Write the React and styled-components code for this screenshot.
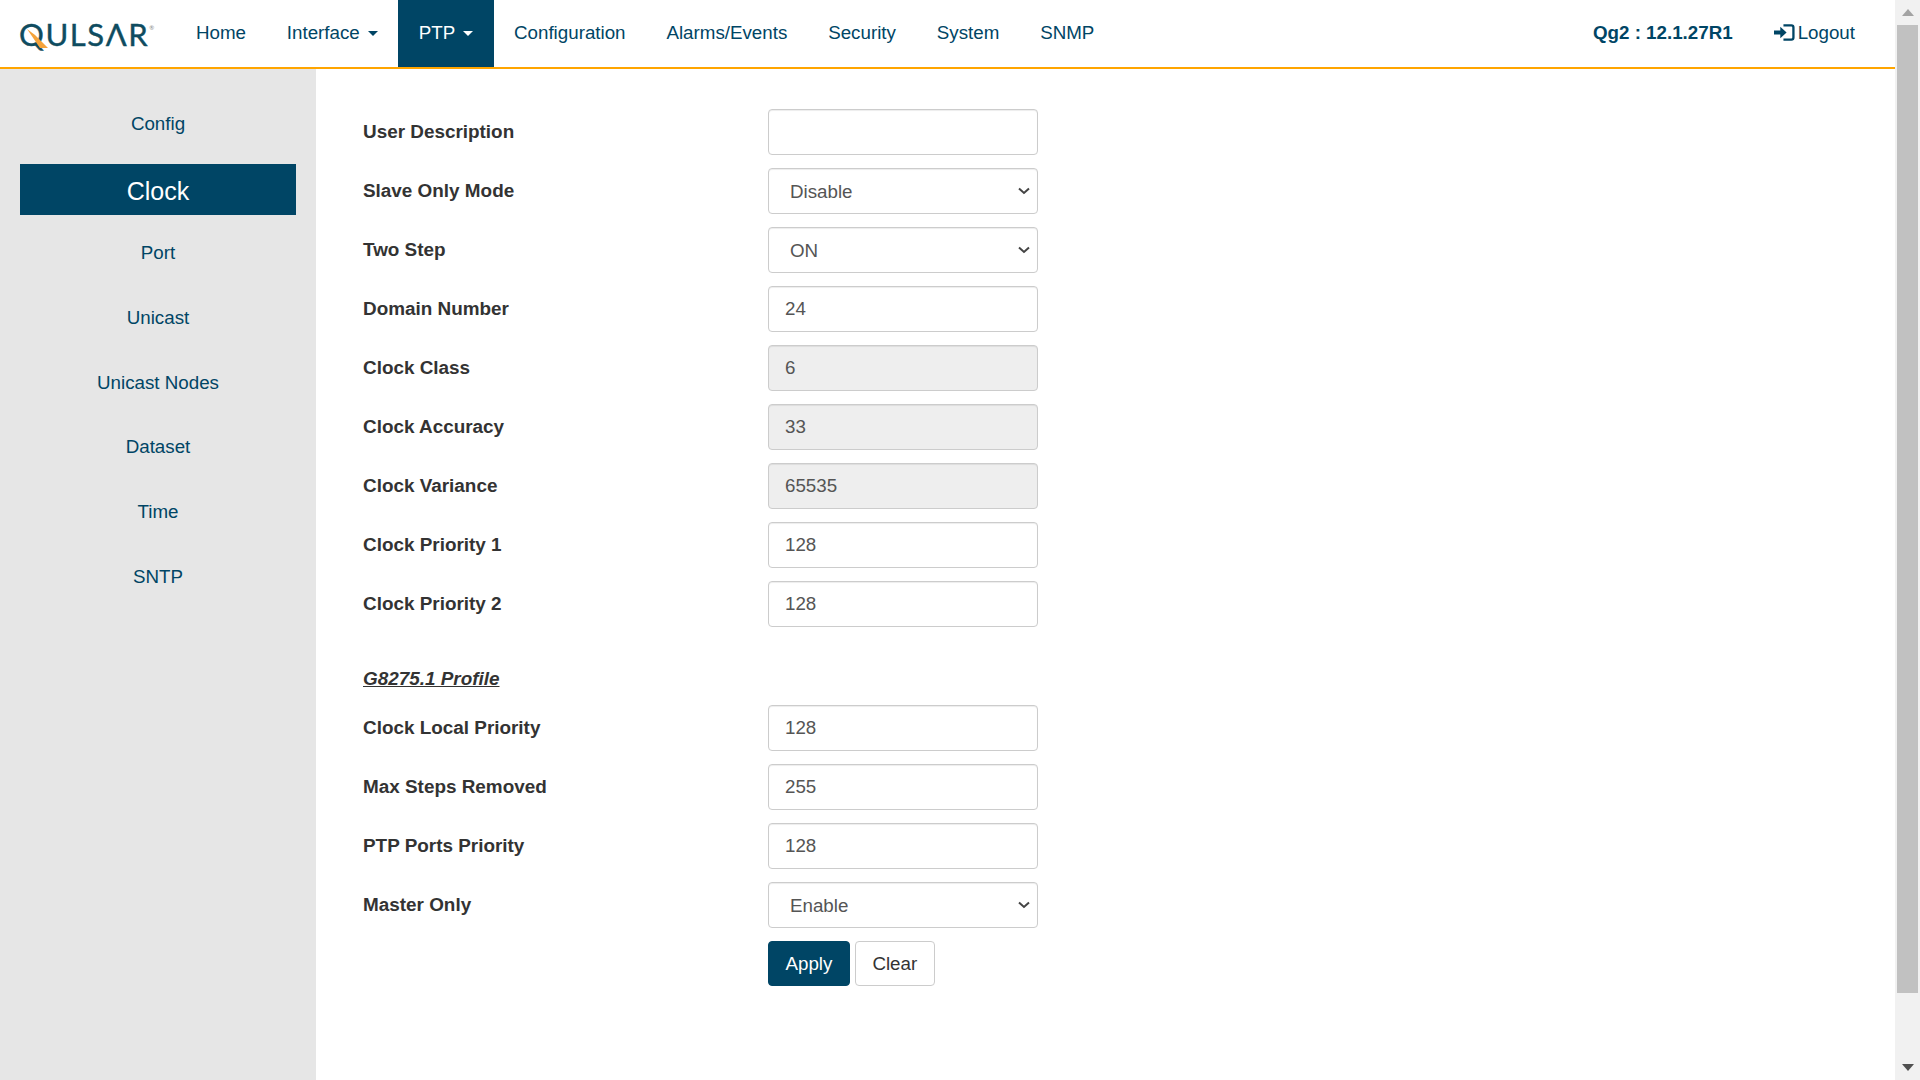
import styled, { createGlobalStyle } from 'styled-components'

const GlobalStyle = createGlobalStyle`
  html, body {
    margin: 0;
    height: 100%;
    overflow: hidden;
    background: #fff;
  }
  * {
    box-sizing: border-box;
  }
  body {
    font-family: "Liberation Sans", Arial, sans-serif;
    color: #333;
  }
`

const Page = styled.div`
  display: flex;
  height: 100vh;
`

const Main = styled.div`
  flex: 1;
  min-width: 0;
  display: flex;
  flex-direction: column;
`

const Navbar = styled.nav`
  height: 69px;
  flex: none;
  display: flex;
  align-items: stretch;
  border-bottom: 2px solid #ffa500;
  background: #fff;
`

const Logo = styled.div`
  position: relative;
  width: 175.5px;
  padding-left: 19px;
  line-height: 55px;
  height: 67px;
  font-family: Lato, sans-serif;
  font-size: 31px;
  letter-spacing: 1.6px;
  color: #0f4c60;
  -webkit-text-stroke: 0.4px #0f4c60;
  white-space: nowrap;
`

const LogoMark = styled.svg`
  position: absolute;
  left: 27px;
  top: 29px;
  width: 22px;
  height: 19px;
`

const LogoReg = styled.span`
  font-size: 6px;
  vertical-align: 16px;
  letter-spacing: 0;
  color: #888;
  -webkit-text-stroke: 0;
`

const NavItem = styled.a`
  display: flex;
  align-items: center;
  gap: 8px;
  padding: 0 20.45px 2px;
  height: 67px;
  font-size: 18.75px;
  color: ${p => (p.$active ? '#fff' : '#004565')};
  background: ${p => (p.$active ? '#004565' : 'transparent')};
`

const Caret = styled.span`
  width: 0;
  height: 0;
  margin-top: 2px;
  border-top: 5px solid currentColor;
  border-left: 5px solid transparent;
  border-right: 5px solid transparent;
`

const NavRight = styled.div`
  margin-left: auto;
  display: flex;
  align-items: center;
  padding: 0 40px 2px 0;
  color: #004565;
  font-size: 18.75px;
`

const Version = styled.span`
  font-weight: 700;
  margin-right: 41px;
`

const Logout = styled.a`
  display: flex;
  align-items: center;
  gap: 3px;
`

const Body = styled.div`
  flex: 1;
  display: flex;
  min-height: 0;
`

const Sidebar = styled.aside`
  width: 316px;
  flex: none;
  display: flex;
  flex-direction: column;
  padding: 29px 20px 0;
  background: #e6e6e6;
`

const SideLink = styled.a`
  display: flex;
  flex: none;
  align-items: center;
  justify-content: center;
  height: 51px;
  margin-top: ${p => (p.$active ? '1px' : '0')};
  margin-bottom: ${p => (p.$active ? '12.8px' : '13.8px')};
  padding-top: ${p => (p.$active ? '4px' : '0')};
  font-size: ${p => (p.$active ? '25px' : '18.75px')};
  color: ${p => (p.$active ? '#fff' : '#004565')};
  background: ${p => (p.$active ? '#004565' : 'transparent')};
`

const Content = styled.main`
  flex: 1;
  padding: 40px 0 0 47px;
`

const Row = styled.div`
  display: flex;
  align-items: center;
  height: 46px;
  margin-bottom: 13px;
`

const Label = styled.label`
  width: 405px;
  flex: none;
  font-size: 18.9px;
  font-weight: 700;
  color: #333;
`

const fieldCss = `
  width: 270px;
  height: 46px;
  border: 1px solid #ccc;
  border-radius: 4px;
  background-color: #fff;
  color: #555;
  font-family: "Liberation Sans", Arial, sans-serif;
  font-size: 18.75px;
  box-shadow: inset 0 1px 1px rgba(0, 0, 0, 0.075);
  outline: none;
`

const Input = styled.input`
  ${fieldCss}
  padding: 6px 16px;

  &:disabled {
    background-color: #eee;
    color: #555;
    opacity: 1;
  }
`

const chevron = `url("data:image/svg+xml,%3Csvg xmlns='http://www.w3.org/2000/svg' width='14' height='8' viewBox='0 0 14 8'%3E%3Cpath d='M2 1.500 7 6 12 1.500' fill='none' stroke='%23444' stroke-width='2'/%3E%3C/svg%3E")`

const Select = styled.select`
  ${fieldCss}
  appearance: none;
  padding: 6px 30px 6px 21px;
  background-image: ${chevron};
  background-repeat: no-repeat;
  background-position: right 6px center;
`

const SectionTitle = styled.div`
  height: 32px;
  margin: 36px 0 10px;
  line-height: 32px;
  font-size: 18.9px;
  font-weight: 700;
  font-style: italic;
  text-decoration: underline;
  color: #333;
`

const Actions = styled.div`
  display: flex;
  gap: 5px;
  margin-left: 405px;
`

const Button = styled.button`
  height: 45px;
  padding: 0 16.5px;
  border-radius: 4px;
  border: 1px solid ${p => (p.$primary ? '#004565' : '#ccc')};
  background: ${p => (p.$primary ? '#004565' : '#fff')};
  color: ${p => (p.$primary ? '#fff' : '#333')};
  font-family: "Liberation Sans", Arial, sans-serif;
  font-size: 18.75px;
`

const ScrollRail = styled.div`
  width: 25px;
  flex: none;
  display: flex;
  flex-direction: column;
  background: #f1f1f1;
`

const ScrollArrow = styled.div`
  height: 25px;
  flex: none;
  display: flex;
  align-items: center;
  justify-content: center;
`

const ScrollThumb = styled.div`
  height: 968px;
  margin: 0 2px 0 2px;
  background: #c1c1c1;
`

const ScrollSpace = styled.div`
  flex: 1;
`

const navItems = [
  { name: 'Home' },
  { name: 'Interface', caret: true },
  { name: 'PTP', caret: true, active: true },
  { name: 'Configuration' },
  { name: 'Alarms/Events' },
  { name: 'Security' },
  { name: 'System' },
  { name: 'SNMP' },
]

const sideItems = ['Config', 'Clock', 'Port', 'Unicast', 'Unicast Nodes', 'Dataset', 'Time', 'SNTP']

const mainFields = [
  { label: 'User Description', value: '' },
  { label: 'Slave Only Mode', options: ['Disable', 'Enable'], value: 'Disable' },
  { label: 'Two Step', options: ['ON', 'OFF'], value: 'ON' },
  { label: 'Domain Number', value: '24' },
  { label: 'Clock Class', value: '6', disabled: true },
  { label: 'Clock Accuracy', value: '33', disabled: true },
  { label: 'Clock Variance', value: '65535', disabled: true },
  { label: 'Clock Priority 1', value: '128' },
  { label: 'Clock Priority 2', value: '128' },
]

const profileFields = [
  { label: 'Clock Local Priority', value: '128' },
  { label: 'Max Steps Removed', value: '255' },
  { label: 'PTP Ports Priority', value: '128' },
  { label: 'Master Only', options: ['Enable', 'Disable'], value: 'Enable' },
]

function Field({ label, value, options, disabled }) {
  return (
    <Row>
      <Label>{label}</Label>
      {options ? (
        <Select defaultValue={value}>
          {options.map(o => <option key={o}>{o}</option>)}
        </Select>
      ) : (
        <Input defaultValue={value} disabled={disabled} />
      )}
    </Row>
  )
}

export default function App() {
  return (
    <Page>
      <GlobalStyle />
      <Main>
        <Navbar>
          <Logo>
            QULSΛR<LogoReg>®</LogoReg>
            <LogoMark viewBox="0 0 22 19">
              <path d="M0 0 L8 6 L21 19 L13 19 Z" fill="#f5a33b" />
            </LogoMark>
          </Logo>
          {navItems.map(item => (
            <NavItem key={item.name} $active={item.active}>
              {item.name}
              {item.caret && <Caret />}
            </NavItem>
          ))}
          <NavRight>
            <Version>Qg2 : 12.1.27R1</Version>
            <Logout>
              <svg width="21" height="17" viewBox="0 0 20 16">
                <path d="M0 6h6V2.500L12 8l-6 5.500V10H0z" fill="#004565" />
                <path d="M9 1.200h7.500a2 2 0 0 1 2 2v9.600a2 2 0 0 1-2 2H9" fill="none" stroke="#004565" strokeWidth="2.200" />
              </svg>
              Logout
            </Logout>
          </NavRight>
        </Navbar>
        <Body>
          <Sidebar>
            {sideItems.map(name => (
              <SideLink key={name} $active={name === 'Clock'}>{name}</SideLink>
            ))}
          </Sidebar>
          <Content>
            {mainFields.map(f => <Field key={f.label} {...f} />)}
            <SectionTitle>G8275.1 Profile</SectionTitle>
            {profileFields.map(f => <Field key={f.label} {...f} />)}
            <Actions>
              <Button $primary>Apply</Button>
              <Button>Clear</Button>
            </Actions>
          </Content>
        </Body>
      </Main>
      <ScrollRail>
        <ScrollArrow>
          <svg width="12" height="7" viewBox="0 0 12 7"><path d="M6 0 L12 7 L0 7 Z" fill="#a3a3a3" /></svg>
        </ScrollArrow>
        <ScrollThumb />
        <ScrollSpace />
        <ScrollArrow>
          <svg width="12" height="7" viewBox="0 0 12 7"><path d="M0 0 L12 0 L6 7 Z" fill="#505050" /></svg>
        </ScrollArrow>
      </ScrollRail>
    </Page>
  )
}
